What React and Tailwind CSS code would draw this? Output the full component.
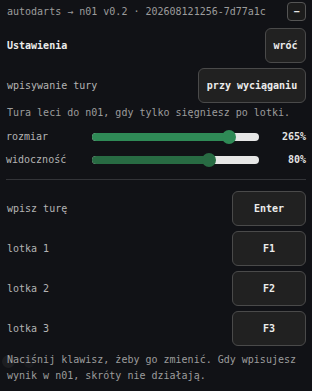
import React from "react";

const Btn = ({ children, className = "" }) => (
  <div
    className={
      "flex items-center justify-center rounded-[6px] border border-[#4a4a4a] bg-[#212121] font-bold text-[#ececec] " +
      className
    }
  >
    {children}
  </div>
);

const Slider = ({ label, value, pct, color, className = "" }) => (
  <div className={"flex h-[16px] items-center " + className}>
    <div className="w-[86px] text-[#b4b4b4]">{label}</div>
    <div className="relative h-[8px] w-[167px] rounded-full bg-[#e6e6e6]">
      <div
        className="absolute left-0 top-0 h-[8px] rounded-full"
        style={{ width: pct + "%", background: color }}
      />
      <div
        className="absolute top-[-3px] h-[14px] w-[14px] rounded-full"
        style={{ left: `calc(${pct}% - 7px)`, background: color }}
      />
    </div>
    <div className="flex-1 text-right font-bold text-[#e4e4e4]">{value}</div>
  </div>
);

const KeyRow = ({ label, k, className = "" }) => (
  <div className={"flex items-center justify-between " + className}>
    <div className="pl-[1px] text-[#b4b4b4]">{label}</div>
    <Btn className="h-[35px] w-[74px]">{k}</Btn>
  </div>
);

export default function App() {
  return (
    <div
      className="relative h-[391px] w-[312px] overflow-hidden bg-[#111216] pl-[6px] pr-[6px] text-[10px] leading-[16px]"
      style={{ fontFamily: '"DejaVu Sans Mono", "Liberation Mono", monospace' }}
    >
      <div className="flex h-[19px] items-center justify-between pt-0 mt-[2px]">
        <div className="pl-[1px] text-[#9c9c9c]">
          autodarts → n01 v0.2 · 202608121256-7d77a1c
        </div>
        <div className="flex h-[19px] w-[19px] items-center justify-center rounded-[4px] border border-[#555] bg-[#1c1c1c] font-bold text-[#e8e8e8]">
          −
        </div>
      </div>

      <div className="mt-[7px] flex items-center justify-between">
        <div className="pl-[1px] font-bold text-[#ececec]">Ustawienia</div>
        <Btn className="h-[35px] w-[41px]">wróć</Btn>
      </div>

      <div className="mt-[5px] flex items-center justify-between">
        <div className="pl-[1px] text-[#b4b4b4]">wpisywanie tury</div>
        <Btn className="h-[35px] w-[108px]">przy wyciąganiu</Btn>
      </div>

      <div className="mt-[2px] pl-[1px] text-[#9c9c9c]">
        Tura leci do n01, gdy tylko sięgniesz po lotki.
      </div>

      <Slider className="mt-[8px]" label="rozmiar" value="265%" pct={82} color="#2f8a56" />
      <Slider className="mt-[7px]" label="widoczność" value="80%" pct={70} color="#286b43" />

      <div className="mt-[11px] h-px bg-[#333438]" />

      <KeyRow className="mt-[11px]" label="wpisz turę" k="Enter" />
      <KeyRow className="mt-[5px]" label="lotka 1" k="F1" />
      <KeyRow className="mt-[5px]" label="lotka 2" k="F2" />
      <KeyRow className="mt-[5px]" label="lotka 3" k="F3" />

      <div className="mt-[6px] pl-[1px] text-[#9c9c9c]">
        Naciśnij klawisz, żeby go zmienić. Gdy wpisujesz wynik w n01, skróty nie działają.
      </div>

      <div className="absolute left-[2px] top-[355px] h-[13px] w-[13px] rounded-full bg-[#ffffff0d]" />
      <div className="absolute left-[24px] top-[355px] h-[13px] w-[10px] rounded-full bg-[#ffffff08]" />
    </div>
  );
}
